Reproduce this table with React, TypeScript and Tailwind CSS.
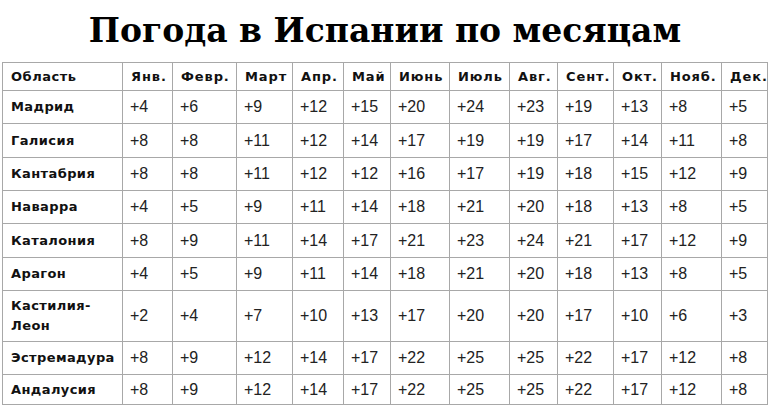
import * as React from "react";

const months = ["Янв.", "Февр.", "Март", "Апр.", "Май", "Июнь", "Июль", "Авг.", "Сент.", "Окт.", "Нояб.", "Дек."];
const widths = [120, 50, 64, 56, 51, 47, 59, 60, 48, 56, 48, 60, 46];

const rows: { name: React.ReactNode; h: string; temps: number[] }[] = [
  { name: "Мадрид", h: "h-[33px]", temps: [4, 6, 9, 12, 15, 20, 24, 23, 19, 13, 8, 5] },
  { name: "Галисия", h: "h-[34px]", temps: [8, 8, 11, 12, 14, 17, 19, 19, 17, 14, 11, 8] },
  { name: "Кантабрия", h: "h-[33px]", temps: [8, 8, 11, 12, 12, 16, 17, 19, 18, 15, 12, 9] },
  { name: "Наварра", h: "h-[33px]", temps: [4, 5, 9, 11, 14, 18, 21, 20, 18, 13, 8, 5] },
  { name: "Каталония", h: "h-[34px]", temps: [8, 9, 11, 14, 17, 21, 23, 24, 21, 17, 12, 9] },
  { name: "Арагон", h: "h-[33px]", temps: [4, 5, 9, 11, 14, 18, 21, 20, 18, 13, 8, 5] },
  {
    name: (
      <>
        Кастилия-
        <br />
        Леон
      </>
    ),
    h: "h-[51px]",
    temps: [2, 4, 7, 10, 13, 17, 20, 20, 17, 10, 6, 3],
  },
  { name: "Эстремадура", h: "h-[33px]", temps: [8, 9, 12, 14, 17, 22, 25, 25, 22, 17, 12, 8] },
  { name: "Андалусия", h: "h-[30px]", temps: [8, 9, 12, 14, 17, 22, 25, 25, 22, 17, 12, 8] },
];

export default function App() {
  return (
    <div className="w-[770px] h-[405px] overflow-hidden bg-white">
      <h1 className="h-[62px] pt-[11px] text-center text-[33px] leading-[40px] font-bold text-black [font-family:'DejaVu_Serif',serif]">
        Погода в Испании по месяцам
      </h1>
      <table className="ml-[2px] w-[765px] table-fixed border-collapse border-b border-b-[#b0b0d8] text-[#111]">
        <colgroup>
          {widths.map((w, i) => (
            <col key={i} style={{ width: w }} />
          ))}
        </colgroup>
        <thead>
          <tr className="h-[28px]">
            <th className="border border-[#a8a8a8] pl-[8px] text-left text-[13px] font-bold tracking-[0.5px] [font-family:'DejaVu_Sans',sans-serif]">
              Область
            </th>
            {months.map((m) => (
              <th
                key={m}
                className="border border-[#a8a8a8] pl-[8px] text-left text-[13px] font-bold tracking-[0.9px] [font-family:'DejaVu_Sans',sans-serif]"
              >
                {m}
              </th>
            ))}
          </tr>
        </thead>
        <tbody>
          {rows.map((r, ri) => (
            <tr key={ri} className={r.h}>
              <td className="border border-[#a8a8a8] pl-[8px] text-[13px] leading-[20px] font-bold tracking-[0.4px] [font-family:'DejaVu_Sans',sans-serif]">
                {r.name}
              </td>
              {r.temps.map((t, ti) => (
                <td
                  key={ti}
                  className="border border-[#a8a8a8] pl-[7px] text-[16px] text-[#222] [font-family:'Liberation_Sans',Arial,sans-serif]"
                >
                  +{t}
                </td>
              ))}
            </tr>
          ))}
        </tbody>
      </table>
    </div>
  );
}
